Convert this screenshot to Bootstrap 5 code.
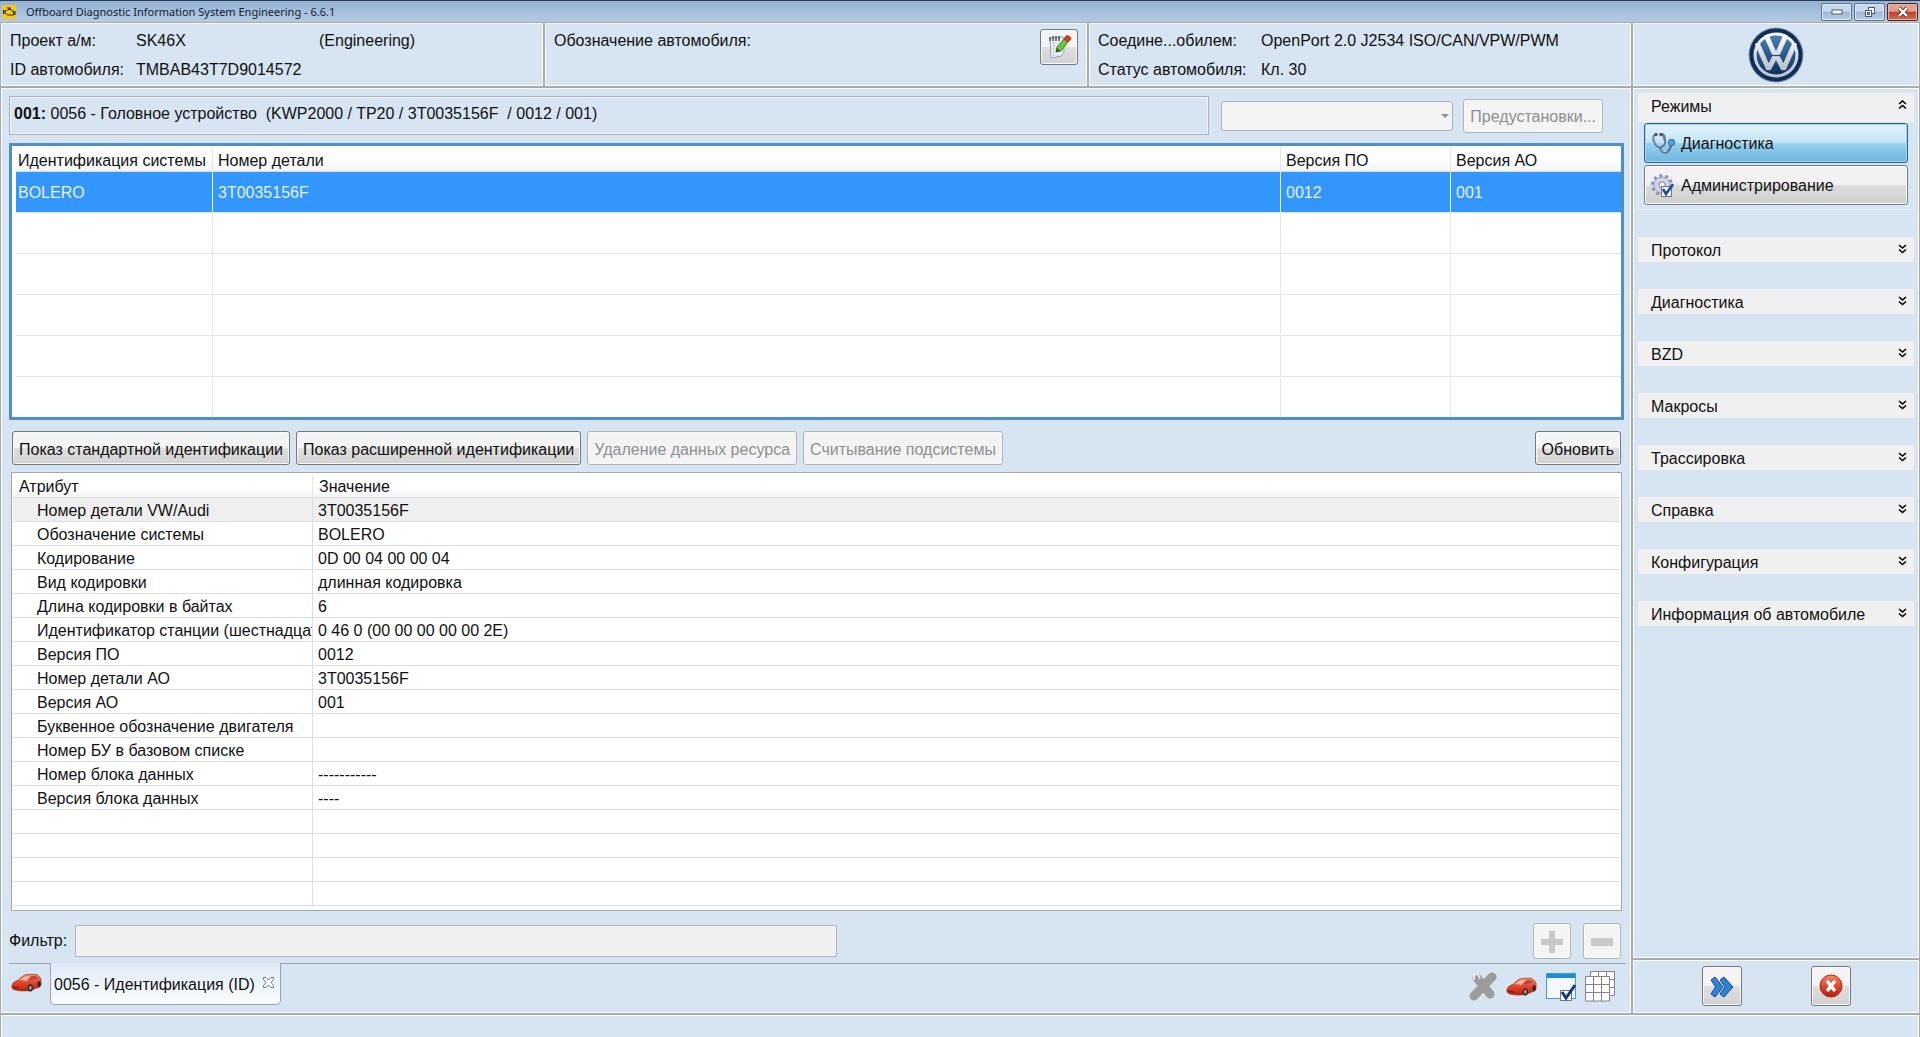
<!DOCTYPE html>
<html lang="ru">
<head>
<meta charset="utf-8">
<meta name="viewport" content="width=device-width, initial-scale=1">
<title>Offboard Diagnostic Information System Engineering - 6.6.1</title>
<link href="https://cdn.jsdelivr.net/npm/bootstrap@5.3.0/dist/css/bootstrap.min.css" rel="stylesheet">
<style>
  :root { --line: #a6abb1; --panel: #d7e4f2; --soft: #f0f0f0; --side: 286px; }
  body { font-family: "Liberation Sans", Arial, sans-serif; font-size: 16px; line-height: 24px; color: #111; background: var(--line); }
  .titlebar { height: 22px; padding: 0 2px; border-top: 1px solid #2c3a55; background: linear-gradient(#94b2d2, #b4cbe5); }
  .titlebar h1 { font: 11px/20px "Noto Sans", "Open Sans", sans-serif; color: #16202e; margin-left: 10px; }
  .win-btns { gap: 2px; }
  .win-btn { width: 31px; height: 18px; padding: 0; border: 1px solid #5d7590; border-radius: 2px; background: linear-gradient(#c6d8ec 45%, #9db8d6 50%, #b8cfe8); box-shadow: inset 0 0 0 1px #dbe7f4; }
  .win-close { border-color: #5a1f1c; background: linear-gradient(#e0a293 45%, #c0412c 50%, #cf6d52); box-shadow: inset 0 0 0 1px #eab3a6; }
  .frame { gap: 2px; padding: 1px 1px 0 1px; }
  .split { gap: 2px; }
  .pane { background: var(--panel); border: 1px solid #fff; }
  .side { width: var(--side); flex: none; }
  .head-pane { height: 63px; padding: 5px 8px 0; }
  .head-pane dl { display: grid; row-gap: 5px; margin: 0; }
  .head-pane dt, .head-pane dd { font-weight: 400; margin: 0; white-space: nowrap; }
  .cols-project { grid-template-columns: 126px 183px 1fr; }
  .cols-link { grid-template-columns: 163px 1fr; }
  .tool { padding: 0; color: #111; border: 1px solid #707880; border-radius: 3px; background: linear-gradient(#f4f4f4 48%, #dedede 52%, #d2d2d2); box-shadow: inset 0 0 0 1px #fafafa; line-height: 24px; }
  .tool:disabled { color: #8d8f92; border-color: #aeb4ba; background: #f4f4f4; opacity: 1; }
  .tool-text { height: 34px; padding: 3px 6px 0; white-space: nowrap; }
  .edit-btn { width: 38px; height: 36px; }
  .work { padding: 7px 6px 3px 7px; min-width: 0; }
  .ecu-title { height: 39px; border: 1px solid #a9b3be; box-shadow: inset 0 0 0 1px #eef4fa; padding: 5px 4px 0; white-space: pre-wrap; }
  .preset-tools { gap: 10px; margin-right: 21px; }
  .preset { width: 232px; height: 30px; border: 1px solid #aeb4ba; border-radius: 3px; background-color: #f4f4f4; padding: 0 8px; opacity: 1; appearance: none; }
  .preset-wrap { position: relative; }
  .preset-wrap::after { content: ""; position: absolute; right: 4px; top: 13px; border: 4px solid transparent; border-top-color: #8d959d; pointer-events: none; }
  .grid-main { border: 3px solid #4f8fc8; background: #fff; margin-top: 8px; padding: 0 0 0 4px; }
  .grid-table { width: 100%; table-layout: fixed; border-collapse: separate; border-spacing: 0; }
  .grid-table th, .grid-table td { font-weight: 400; white-space: nowrap; overflow: hidden; border-right: 1px solid #e6e6e6; border-bottom: 1px solid #e2e4e6; }
  .grid-table tr > :last-child { border-right: 0; }
  .grid-table th { background: linear-gradient(#fff 50%, #f3f5f7); border-bottom-color: #d8dadd; }
  .grid-main th { height: 26px; padding: 4px 5px 0; line-height: 21px; }
  .grid-main td { height: 41px; padding: 2px 5px 0; }
  .grid-main tbody tr:last-child td { height: 40px; border-bottom: 0; }
  .grid-main tr > :first-child { padding-left: 2px; }
  .grid-main tr.picked td { background: #3296fd; color: #e4f3ff; border-right-color: #e6f1fc; }
  .actions { padding: 11px 3px 0 3px; gap: 6px; }
  .grid-attr { border: 1px solid #a0a8b0; background: #fff; margin: 7px 2px 0; padding: 2px 2px 4px 1px; }
  .grid-attr th { height: 23px; padding: 2px 6px 0; line-height: 20px; }
  .grid-attr td { height: 24px; padding: 2px 5px 0; line-height: 21px; border-color: #dcdfe2; }
  .grid-attr td:first-child { padding: 2px 0 0 24px; }
  .grid-attr tbody tr:first-child td { background: #efefef; }
  .filter { padding: 12px 3px 4px 0; }
  .filter-box { width: 762px; height: 32px; border: 1px solid #a9b0b7; border-radius: 2px; background: #efefef; box-shadow: inset 0 0 0 1px #f8f8f8; margin-left: 8px; padding: 0 6px; }
  .pm { width: 38px; height: 36px; }
  .tabs { height: 46px; border-top: 1px solid #98a3b0; margin-right: -2px; padding: 0 11px 0 2px; }
  .page-tab { height: 42px; margin: -1px 0 0 8px; border: 1px solid #98a3b0; border-top: 0; border-radius: 0 0 5px 5px; background: linear-gradient(#dfeaf6, #fafcff); padding: 2px 6px 0 3px; white-space: nowrap; }
  .tab-tools { gap: 9px; }
  .icon-btn { border: 0; background: none; padding: 0; line-height: 0; }
  .side-body { padding: 4px 4px 0 4px; }
  .grp { display: flex; justify-content: space-between; align-items: flex-start; width: 100%; height: 25px; border: 0; background: var(--soft); padding: 2px 7px 0 13px; color: #111; text-align: left; }
  .grp svg { margin-top: 5px; }
  .grp-open { height: 29px; }
  .grp-list { border: 1px solid #e3ecf5; border-top: 0; padding: 1px 5px 4px; gap: 2px; }
  .grp-gap { margin-top: 27px; }
  .mode { display: flex; align-items: center; gap: 6px; height: 40px; padding: 1px 6px 0; border: 1px solid #747b82; border-radius: 3px; color: #111; background: linear-gradient(#f2f2f2 48%, #dcdcdc 52%, #cfcfcf); box-shadow: inset 0 0 0 1px #fafafa; }
  .mode-on { border-color: #2c628b; background: linear-gradient(#e2f3fc, #c4e5f6 48%, #98d1ef 52%, #6db6dd); box-shadow: inset 0 0 0 1px #a8d4ec; }
  .side-foot { height: 53px; padding-top: 5px; gap: 69px; }
  .foot-btn { width: 40px; height: 40px; }
  .status { height: 23px; border-bottom: 0; }
</style>
</head>
<body>
<!-- shared drawings -->
<svg width="0" height="0" class="position-absolute" aria-hidden="true">
  <defs>
    <linearGradient id="gRed" x1="0" y1="0" x2="0" y2="1"><stop offset="0" stop-color="#f58a6c"/><stop offset=".5" stop-color="#e2452a"/><stop offset="1" stop-color="#b3200f"/></linearGradient>
    <linearGradient id="gBlue" x1="0" y1="0" x2="0" y2="1"><stop offset="0" stop-color="#4a7fb5"/><stop offset="1" stop-color="#0c2f5e"/></linearGradient>
    <linearGradient id="gSilver" x1="0" y1="0" x2="0" y2="1"><stop offset="0" stop-color="#fff"/><stop offset="1" stop-color="#b9c2cc"/></linearGradient>
  </defs>
  <symbol id="car" viewBox="0 0 32 20">
    <path d="M1 13 Q1 9 8 7 Q12 1 19 1 L26 1 Q30 3 31 6 L31 12 Q30 15 27 15 L20 18 Q10 19 3 17 Q0 15 1 13Z" fill="url(#gRed)" stroke="#a3301d" stroke-width=".7"/>
    <path d="M9 7 Q13 3 18 2.500 L20 3 Q17 6 16 8 Q12 7 9 7Z" fill="#f9b5a4"/><path d="M18 7.500 L21 3 L26 3 L28 5.500Z" fill="#b5453a"/>
    <ellipse cx="20" cy="15" rx="2.600" ry="3.800" fill="#262626"/><ellipse cx="20" cy="15" rx="1.300" ry="2.200" fill="#aaa"/>
    <ellipse cx="29" cy="11" rx="1.700" ry="3" fill="#262626"/><path d="M2 14 L8 15.500" stroke="#7e1c10" stroke-width="1.200"/>
  </symbol>
  <symbol id="down" viewBox="0 0 9 10"><path d="M1 1 L4.500 4 L8 1 M1 5.500 L4.500 8.500 L8 5.500" fill="none" stroke="#000" stroke-width="1.600"/></symbol>
  <symbol id="up" viewBox="0 0 9 10"><path d="M1 4 L4.500 1 L8 4 M1 8.500 L4.500 5.500 L8 8.500" fill="none" stroke="#000" stroke-width="1.600"/></symbol>
</svg>

<div class="min-vh-100 d-flex flex-column">
  <header class="titlebar d-flex align-items-center">
    <svg width="14" height="14" viewBox="0 0 14 14" class="flex-shrink-0"><rect width="14" height="14" rx="1" fill="#f7c71e"/><path d="M3 5.500 H5 L6 4.500 H9 L10 6 H11.500 V10 H5.500 L4 8.500 H3Z M5 3 H9 M7 3 V4.500 M1.500 5 V9 M1.500 7 H3 M11.500 8 H13 M13 6 V10" fill="none" stroke="#222" stroke-width="1"/></svg>
    <h1 class="mb-0 me-auto">Offboard Diagnostic Information System Engineering - 6.6.1</h1>
    <div class="win-btns d-flex">
      <button class="win-btn d-flex align-items-center justify-content-center" aria-label="Свернуть"><svg width="12" height="6"><rect x="1" y="1" width="10" height="4" fill="#fff" stroke="#50586a"/></svg></button>
      <button class="win-btn d-flex align-items-center justify-content-center" aria-label="Восстановить"><svg width="12" height="12" fill="#fff" stroke="#50586a"><rect x="4.500" y="1.500" width="6" height="6"/><rect x="1.500" y="4.500" width="6" height="6"/><rect x="3.500" y="6.500" width="2" height="2" fill="#9db8d6"/></svg></button>
      <button class="win-btn win-close d-flex align-items-center justify-content-center" aria-label="Закрыть"><svg width="12" height="12" viewBox="0 0 12 12"><path d="M2 2 L10 10 M10 2 L2 10" stroke="#5c3030" stroke-width="4"/><path d="M2 2 L10 10 M10 2 L2 10" stroke="#fff" stroke-width="2.400"/></svg></button>
    </div>
  </header>

  <div class="frame d-flex flex-column flex-grow-1">
    <div class="split d-flex">
      <section class="split d-flex flex-grow-1">
        <div class="pane head-pane w-100">
          <dl class="cols-project"><dt>Проект а/м:</dt><dd>SK46X</dd><dd>(Engineering)</dd><dt>ID автомобиля:</dt><dd>TMBAB43T7D9014572</dd></dl>
        </div>
        <div class="pane head-pane w-100 d-flex justify-content-between">
          <span>Обозначение автомобиля:</span>
          <button class="tool edit-btn d-flex align-items-center justify-content-center" aria-label="Изменить">
            <svg width="26" height="26" viewBox="0 0 26 26"><path d="M4 4 L17 3 L18 18 L15 22 L5 24Z" fill="#fff" stroke="#8d98c2"/><path d="M5 9 H16 M5 12 H14 M5 15 H13 M5 18 H14 M5 21 H13 M8 8 V23" stroke="#c0c9e4"/><path d="M4 3 V7 M7 2 V7 M10 2 V7 M13 2 V7" stroke="#484c55" stroke-width="1.500"/><path d="M10 18 L11 13 L18 5 L22 8 L15 17Z" fill="#6cc43c" stroke="#2c8a1b"/><path d="M18 5 L20 2 Q24 1 25 5 L22 8Z" fill="#d83b2b" stroke="#9c2419" stroke-width=".7"/><path d="M10 18 L11 14 L14 17Z" fill="#314f25"/></svg>
          </button>
        </div>
        <div class="pane head-pane w-100">
          <dl class="cols-link"><dt>Соедине...обилем:</dt><dd>OpenPort 2.0 J2534 ISO/CAN/VPW/PWM</dd><dt>Статус автомобиля:</dt><dd>Кл. 30</dd></dl>
        </div>
      </section>
      <div class="pane side d-flex justify-content-center align-items-center">
        <svg width="56" height="56" viewBox="0 0 56 56" role="img" aria-label="Volkswagen">
          <circle cx="28" cy="28" r="27.500" fill="#8695a6"/><circle cx="28" cy="28" r="26.500" fill="#0f2f5a"/><circle cx="28" cy="28" r="22.500" fill="url(#gSilver)"/><circle cx="28" cy="28" r="19.500" fill="url(#gBlue)"/>
          <path d="M18 8 L26.500 27 H29.500 L38 8 M9 16 L20.500 42 L27 29.500 H29 L35.500 42 L47 16" fill="none" stroke="url(#gSilver)" stroke-width="5" stroke-linejoin="bevel"/>
          <path d="M22 28.500 H34" stroke="#1c4674" stroke-width="1.200"/>
        </svg>
      </div>
    </div>

    <div class="split d-flex flex-grow-1">
      <main class="pane work flex-grow-1 d-flex flex-column">
        <div class="d-flex align-items-center gap-2">
          <div class="ecu-title flex-grow-1"><b>001:</b> 0056 - Головное устройство  (KWP2000 / TP20 / 3T0035156F  / 0012 / 001)</div>
          <div class="preset-tools d-flex align-items-center ms-1">
            <div class="preset-wrap d-flex"><select class="preset" disabled aria-label="Предустановка"><option></option></select></div>
            <button class="tool tool-text" disabled>Предустановки...</button>
          </div>
        </div>

        <div class="grid-main">
          <table class="grid-table">
            <colgroup><col style="width:197px"><col><col style="width:170px"><col style="width:170px"></colgroup>
            <thead><tr><th scope="col">Идентификация системы</th><th scope="col">Номер детали</th><th scope="col">Версия ПО</th><th scope="col">Версия АО</th></tr></thead>
            <tbody>
              <tr class="picked"><td>BOLERO</td><td>3T0035156F</td><td>0012</td><td>001</td></tr>
              <tr><td></td><td></td><td></td><td></td></tr><tr><td></td><td></td><td></td><td></td></tr>
              <tr><td></td><td></td><td></td><td></td></tr><tr><td></td><td></td><td></td><td></td></tr>
              <tr><td></td><td></td><td></td><td></td></tr>
            </tbody>
          </table>
        </div>

        <div class="actions d-flex">
          <button class="tool tool-text">Показ стандартной идентификации</button>
          <button class="tool tool-text">Показ расширенной идентификации</button>
          <button class="tool tool-text" disabled>Удаление данных ресурса</button>
          <button class="tool tool-text" disabled>Считывание подсистемы</button>
          <button class="tool tool-text ms-auto">Обновить</button>
        </div>

        <div class="grid-attr flex-grow-1">
          <table class="grid-table">
            <colgroup><col style="width:300px"><col></colgroup>
            <thead><tr><th scope="col">Атрибут</th><th scope="col">Значение</th></tr></thead>
            <tbody>
              <tr><td>Номер детали VW/Audi</td><td>3T0035156F</td></tr>
              <tr><td>Обозначение системы</td><td>BOLERO</td></tr>
              <tr><td>Кодирование</td><td>0D 00 04 00 00 04</td></tr>
              <tr><td>Вид кодировки</td><td>длинная кодировка</td></tr>
              <tr><td>Длина кодировки в байтах</td><td>6</td></tr>
              <tr><td>Идентификатор станции (шестнадцат</td><td>0 46 0 (00 00 00 00 00 2E)</td></tr>
              <tr><td>Версия ПО</td><td>0012</td></tr>
              <tr><td>Номер детали АО</td><td>3T0035156F</td></tr>
              <tr><td>Версия АО</td><td>001</td></tr>
              <tr><td>Буквенное обозначение двигателя</td><td></td></tr>
              <tr><td>Номер БУ в базовом списке</td><td></td></tr>
              <tr><td>Номер блока данных</td><td>-----------</td></tr>
              <tr><td>Версия блока данных</td><td>----</td></tr>
              <tr><td></td><td></td></tr><tr><td></td><td></td></tr><tr><td></td><td></td></tr><tr><td></td><td></td></tr>
            </tbody>
          </table>
        </div>

        <div class="filter d-flex align-items-center">
          <label for="filter">Фильтр:</label>
          <input id="filter" type="text" class="filter-box">
          <div class="d-flex ms-auto gap-2">
            <button class="tool pm me-1" disabled aria-label="Добавить"><svg width="22" height="22"><path d="M8 0h6v8h8v6h-8v8h-6v-8h-8v-6h8z" fill="#c9c9c9"/></svg></button>
            <button class="tool pm" disabled aria-label="Удалить"><svg width="22" height="22"><rect y="7" width="22" height="8" fill="#c9c9c9"/></svg></button>
          </div>
        </div>

        <div class="tabs d-flex">
          <button class="icon-btn pb-2" aria-label="Автомобиль"><svg width="31" height="20"><use href="#car"/></svg></button>
          <div class="page-tab d-flex align-items-center gap-2">
            <span>0056 - Идентификация (ID)</span>
            <button class="icon-btn mb-1" aria-label="Закрыть вкладку"><svg width="11" height="11" viewBox="0 0 11 11"><path d="M.5 .5 H3 L5.500 3 L8 .5 H10.500 V2.500 L8 5.500 L10.500 8.500 V10.500 H8 L5.500 8 L3 10.500 H.5 V8.500 L3 5.500 L.5 2.500Z" fill="#fff" stroke="#6d747c"/></svg></button>
          </div>
          <div class="tab-tools ms-auto d-flex align-items-center">
            <button class="icon-btn" aria-label="Очистить"><svg width="28" height="29" viewBox="0 0 28 29"><path d="M8 6 L21 22 M23 5 L5 24" stroke="#9c9c9c" stroke-width="9" stroke-linecap="round"/><path d="M5 8 L5 3 L9 2 L11 7" fill="none" stroke="#fff" stroke-width="1.500"/></svg></button>
            <button class="icon-btn" aria-label="Показать автомобиль"><svg width="31" height="20"><use href="#car"/></svg></button>
            <button class="icon-btn" aria-label="Выбор окна"><svg width="30" height="29" viewBox="0 0 30 29"><rect x=".5" y="1.500" width="29" height="25" fill="#f6f8ff" stroke="#35a0dd"/><rect x="1" y="2" width="28" height="4" fill="#1d8dd0"/><rect x="14.500" y="18.500" width="11" height="10" fill="#fff" stroke="#777"/><path d="M16 20 L20 26 L29 13" fill="none" stroke="#163a80" stroke-width="3"/></svg></button>
            <button class="icon-btn" aria-label="Таблицы"><svg width="30" height="31" viewBox="0 0 30 31" fill="#fff" stroke="#8280a0"><path d="M5.500 .5 H29.500 V24.500 H5.500Z M13.500 .5 V24 M21.500 .5 V24 M5.500 8.500 H29 M5.500 16.500 H29"/><path d="M.5 5.500 H24.500 V30 H.5Z M8.500 5.500 V30 M16.500 5.500 V30 M.5 13.500 H24 M.5 21.500 H24"/></svg></button>
          </div>
        </div>
      </main>

      <aside class="side split d-flex flex-column">
        <div class="pane side-body flex-grow-1">
          <button class="grp grp-open"><span>Режимы</span><svg width="9" height="10"><use href="#up"/></svg></button>
          <div class="grp-list d-flex flex-column">
            <button class="mode mode-on">
              <svg width="24" height="24" viewBox="0 0 24 24" fill="none"><path d="M4 3 Q1 5 4 11 Q6 15 9 15 Q14 14 14 9 L13 4 Q12 2 9 3 M9 15 Q11 22 16 20 Q19 18 20 13" stroke="#5d7b92" stroke-width="2.600"/><path d="M4 4 Q2 6 5 11 Q6 14 9 14 Q13 13 13 9 M10 17 Q12 21 16 19" stroke="#d3e5f0" stroke-width=".9"/><circle cx="5" cy="2.500" r="1.700" fill="#555"/><circle cx="10" cy="2.500" r="1.700" fill="#555"/><circle cx="20.500" cy="10.500" r="3.200" fill="#55a3dc" stroke="#2a6798"/></svg>
              <span>Диагностика</span>
            </button>
            <button class="mode">
              <svg width="24" height="24" viewBox="0 0 24 24"><circle cx="11" cy="11" r="9.500" fill="none" stroke="#8b8fb8" stroke-width="3" stroke-dasharray="3 2.970"/><circle cx="11" cy="11" r="8" fill="#d3d5e8" stroke="#9a9dc0"/><circle cx="11" cy="11" r="3.200" fill="#f1f1f4" stroke="#7c80a8"/><rect x="10.500" y="12.500" width="10" height="10" fill="#fff" stroke="#6f6f8f"/><path d="M12 15 L15 20 L22 10" fill="none" stroke="#1c4f9c" stroke-width="2.600"/></svg>
              <span>Администрирование</span>
            </button>
          </div>
          <button class="grp grp-gap"><span>Протокол</span><svg width="9" height="10"><use href="#down"/></svg></button>
          <button class="grp grp-gap"><span>Диагностика</span><svg width="9" height="10"><use href="#down"/></svg></button>
          <button class="grp grp-gap"><span>BZD</span><svg width="9" height="10"><use href="#down"/></svg></button>
          <button class="grp grp-gap"><span>Макросы</span><svg width="9" height="10"><use href="#down"/></svg></button>
          <button class="grp grp-gap"><span>Трассировка</span><svg width="9" height="10"><use href="#down"/></svg></button>
          <button class="grp grp-gap"><span>Справка</span><svg width="9" height="10"><use href="#down"/></svg></button>
          <button class="grp grp-gap"><span>Конфигурация</span><svg width="9" height="10"><use href="#down"/></svg></button>
          <button class="grp grp-gap"><span>Информация об автомобиле</span><svg width="9" height="10"><use href="#down"/></svg></button>
        </div>
        <div class="pane side-foot d-flex justify-content-center">
          <button class="tool foot-btn" aria-label="Далее"><svg width="24" height="22" viewBox="0 0 24 22"><path d="M1 4 L5 1 L13 11 L5 21 L1 18 L5.500 11Z M10 4 L14 1 L23 11 L14 21 L10 18 L15 11Z" fill="#2f80d6" stroke="#0f4c96"/></svg></button>
          <button class="tool foot-btn" aria-label="Отмена"><svg width="24" height="24" viewBox="0 0 24 24"><circle cx="12" cy="12" r="11" fill="url(#gRed)" stroke="#a52a18"/><path d="M8 7 L16 17 M16 7 L8 17" stroke="#fff" stroke-width="3.600"/></svg></button>
        </div>
      </aside>
    </div>

    <footer class="pane status"></footer>
  </div>
</div>
<script src="https://cdn.jsdelivr.net/npm/bootstrap@5.3.0/dist/js/bootstrap.bundle.min.js"></script>
</body>
</html>
